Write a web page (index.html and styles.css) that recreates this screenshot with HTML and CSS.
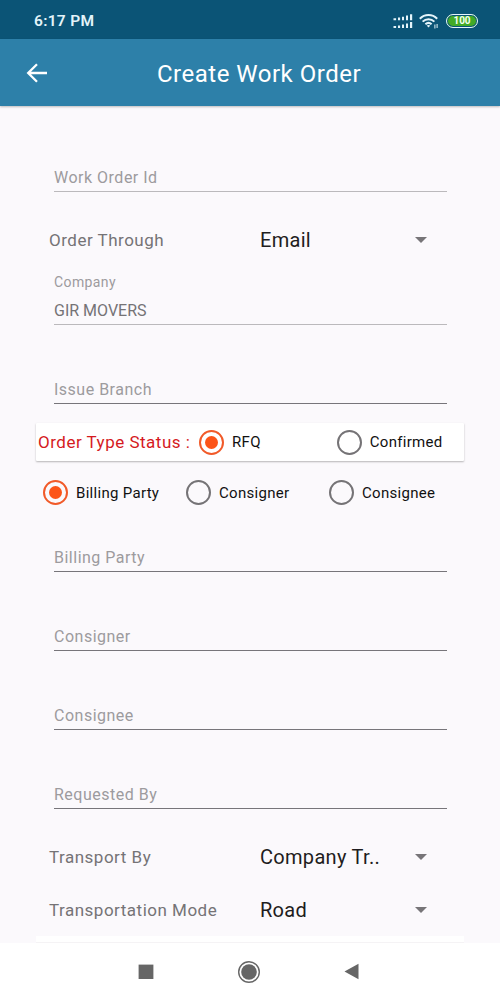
FILE: index.html
```html
<!DOCTYPE html>
<html lang="en">
<head>
<meta charset="utf-8">
<title>Create Work Order</title>
<link rel="stylesheet" href="styles.css">
</head>
<body>
<div class="screen">
  <div class="status-bar">
    <span class="clock">6:17 PM</span>
    <div class="indicators">
      <svg class="signal" width="20" height="15" viewBox="0 0 20 15" fill="#e4f4fa">
        <path d="M.5 4.2h2.6v2H.5zM5 3.6h2.1v2.6H5zM9 2.8h2v3.4H9zM13 1.6h2v4.6h-2zM17 .3h2.2v5.9H17zM.5 12h2.6v2H.5zM5 11.4h2.1V14H5zM9 10.6h2V14H9zM13 9.4h2V14h-2zM17 8.1h2.2V14H17z"/>
      </svg>
      <svg class="wifi" width="20" height="15" viewBox="0 0 20 15" fill="none" stroke="#e4f4fa">
        <path d="M.8 4.7C5.6-.2 13.4-.2 18.2 4.7M3.6 7.6c3.4-3.3 8.4-3.3 11.8 0M6.4 10.3c1.9-1.7 4.3-1.7 6.2 0" stroke-width="2"/>
        <path d="M7.7 11.5q1.8-1 3.6 0L9.5 13.6z" fill="#e4f4fa" stroke="none"/>
        <path d="M15.9 10.5v4M18.1 10v4" stroke-width="1"/>
      </svg>
      <span class="battery">100</span>
    </div>
  </div>
  <header class="app-bar">
    <svg class="back" width="22" height="20" viewBox="0 0 22 20" fill="none" stroke="#fff" stroke-width="2.3">
      <path d="M21 10H2M11 1.2L2.2 10l8.800 8.800"/>
    </svg>
    <h1 class="title">Create Work Order</h1>
  </header>
  <main class="form">
    <div class="field soft first"><span class="hint">Work Order Id</span></div>
    <div class="select-row upper">
      <span class="label">Order Through</span>
      <span class="value email">Email</span>
      <svg class="caret" width="12" height="6" viewBox="0 0 12 6"><path d="M0 0h12L6 6z" fill="#777578"/></svg>
    </div>
    <div class="field soft company"><span class="caption">Company</span><span class="entry">GIR MOVERS</span></div>
    <div class="field branch"><span class="hint">Issue Branch</span></div>
    <div class="status-card">
      <span class="card-label">Order Type Status :</span>
      <span class="radio on"></span><span class="option">RFQ</span>
      <span class="radio confirmed"></span><span class="option">Confirmed</span>
    </div>
    <div class="party-row">
      <div class="choice"><span class="radio on"></span><span class="option">Billing Party</span></div>
      <div class="choice"><span class="radio"></span><span class="option">Consigner</span></div>
      <div class="choice"><span class="radio"></span><span class="option">Consignee</span></div>
    </div>
    <div class="field billing"><span class="hint">Billing Party</span></div>
    <div class="field"><span class="hint">Consigner</span></div>
    <div class="field"><span class="hint">Consignee</span></div>
    <div class="field"><span class="hint">Requested By</span></div>
    <div class="select-row lower">
      <span class="label">Transport By</span>
      <span class="value">Company Tr..</span>
      <svg class="caret" width="12" height="6" viewBox="0 0 12 6"><path d="M0 0h12L6 6z" fill="#777578"/></svg>
    </div>
    <div class="select-row">
      <span class="label">Transportation Mode</span>
      <span class="value">Road</span>
      <svg class="caret" width="12" height="6" viewBox="0 0 12 6"><path d="M0 0h12L6 6z" fill="#777578"/></svg>
    </div>
    <div class="next-card"></div>
  </main>
  <nav class="nav-bar">
    <svg width="16" height="16" viewBox="0 0 16 16"><path d="M.6.6h14.800v14.400H.6z" fill="#666"/></svg>
    <svg width="24" height="24" viewBox="0 0 24 24"><circle cx="12" cy="12" r="10.300" fill="none" stroke="#666" stroke-width="1.400"/><circle cx="12" cy="12" r="7.800" fill="#666"/></svg>
    <svg width="16" height="17" viewBox="0 0 16 17"><path d="M14.500.7v15.600L.5 8.500z" fill="#666"/></svg>
  </nav>
</div>
</body>
</html>
```
FILE: styles.css
```css
* { box-sizing: border-box; }
body { margin: 0; font-family: Roboto, sans-serif; }
.screen { width: 500px; height: 1000px; display: flex; flex-direction: column; overflow: hidden; background: #fff; }
.status-bar { height: 39px; flex: none; background: #0b5476; display: flex; align-items: center; justify-content: space-between; padding: 3px 22px 0 34px; }
.clock { color: #e4f4fa; font-size: 15.5px; line-height: 18px; font-weight: 600; letter-spacing: .3px; }
.indicators { display: flex; align-items: center; }
.wifi { margin-left: 6px; }
.battery { margin-left: 7px; width: 32px; height: 14px; border: 1.500px solid #e4f4fa; border-radius: 7px; background: #42aa26; box-shadow: inset 0 0 0 1px #0b5476; color: #f2fff0; font-size: 10px; line-height: 11px; font-weight: 700; text-align: center; }
.app-bar { height: 67px; flex: none; background: #2d80a9; display: flex; align-items: center; padding: 0 26px; position: relative; z-index: 1; box-shadow: 0 1px 2px rgba(0,0,0,.25); }
.title { margin: 2px 0 0 109px; color: #fff; font-size: 24px; line-height: 28px; font-weight: 400; letter-spacing: .5px; white-space: nowrap; }
.form { height: 837px; flex: none; background: #fbf9fc; padding: 0 36px; display: flex; flex-direction: column; }
.field { height: 79px; flex: none; margin: 0 17px 0 18px; border-bottom: 1.500px solid #77757a; display: flex; flex-direction: column; justify-content: flex-end; padding-bottom: 4px; white-space: nowrap; }
.soft { border-bottom-color: #bbb9bc; }
.first { height: 86px; }
.hint { color: #9d9b9e; font-size: 16px; line-height: 19px; letter-spacing: .5px; }
.caption { color: #9d9b9e; font-size: 14px; line-height: 17px; letter-spacing: .4px; margin-bottom: 10px; }
.entry { color: #757376; font-size: 16px; line-height: 19px; }
.select-row { height: 53px; flex: none; display: flex; align-items: center; padding: 0 37px 0 13px; white-space: nowrap; }
.upper { margin-top: 21px; }
.lower { margin-top: 21px; }
.label { width: 211px; color: #757376; font-size: 17px; line-height: 20px; letter-spacing: .5px; }
.value { flex: 1; color: #1f1d20; font-size: 20px; line-height: 24px; letter-spacing: .3px; }
.company { height: 59px; }
.status-card { margin-top: 19px; height: 38px; flex: none; background: #fff; box-shadow: 0 1px 2px rgba(0,0,0,.28); border-radius: 1px; display: flex; align-items: center; padding-left: 2px; white-space: nowrap; }
.card-label { width: 161px; color: #d51a1e; font-size: 17px; line-height: 20px; letter-spacing: .5px; }
.radio { width: 25px; height: 25px; flex: none; border: 2.500px solid #757376; border-radius: 50%; display: grid; place-items: center; }
.on { border-color: #f15a29; }
.on::before { content: ""; width: 13px; height: 13px; border-radius: 50%; background: #fc5418; }
.option { margin-left: 8px; color: #111; font-size: 15px; line-height: 18px; letter-spacing: .3px; }
.confirmed { margin-left: 76px; }
.party-row { height: 31px; margin-top: 16px; flex: none; display: grid; grid-template-columns: 143px 143px auto; padding-left: 7px; white-space: nowrap; }
.choice { display: flex; align-items: center; }
.billing { height: 64px; }
.next-card { margin-top: auto; height: 7px; flex: none; background: #fff; border-bottom: 1px solid #f5f3f5; }
.nav-bar { height: 57px; flex: none; display: flex; align-items: center; justify-content: space-between; padding: 0 140px 0 138px; background: #fff; }
```
